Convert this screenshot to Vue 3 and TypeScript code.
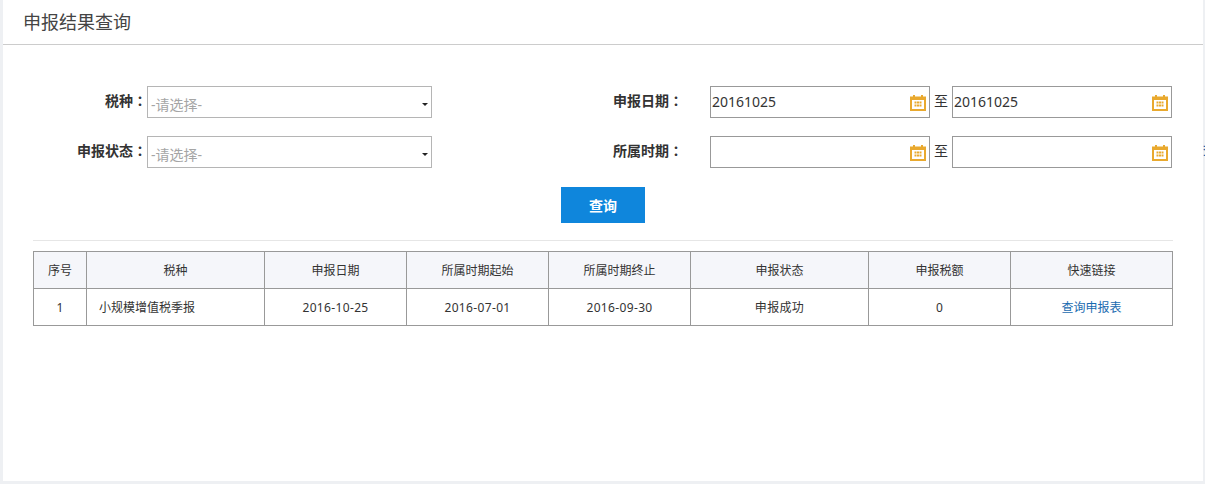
<script setup lang="ts">
const headers: { label: string; width: number }[] = [
  { label: '序号', width: 53 },
  { label: '税种', width: 178 },
  { label: '申报日期', width: 142 },
  { label: '所属时期起始', width: 142 },
  { label: '所属时期终止', width: 142 },
  { label: '申报状态', width: 178 },
  { label: '申报税额', width: 142 },
  { label: '快速链接', width: 162 },
]
const row = ['1', '小规模增值税季报', '2016-10-25', '2016-07-01', '2016-09-30', '申报成功', '0']
</script>

<template>
  <div class="page">
    <main class="panel">
      <h1 class="title">申报结果查询</h1>
      <form class="form" @submit.prevent>
        <div class="form-row">
          <label class="label label-left">税种<span class="colon">：</span></label>
          <div class="select"><span>-请选择-</span><i class="caret"></i></div>
          <label class="label label-right">申报日期<span class="colon">：</span></label>
          <div class="date"><span>20161025</span><svg class="cal" viewBox="0 0 16 16"><path fill="#e9a92f" fill-rule="evenodd" d="M3 0h2v1.5h6V0h2v1.5h3V16H0V1.5h3zM2 5v9h12V5z"/><path fill="#e9a92f" d="M4.5 6.5h2v2h-2zM7 6.5h2v2H7zM9.5 6.5h2v2h-2zM4.5 9.5h2v2h-2zM7 9.5h2v2H7zM9.5 9.5h2v2h-2z"/></svg></div>
          <span class="to">至</span>
          <div class="date"><span>20161025</span><svg class="cal" viewBox="0 0 16 16"><path fill="#e9a92f" fill-rule="evenodd" d="M3 0h2v1.5h6V0h2v1.5h3V16H0V1.5h3zM2 5v9h12V5z"/><path fill="#e9a92f" d="M4.5 6.5h2v2h-2zM7 6.5h2v2H7zM9.5 6.5h2v2h-2zM4.5 9.5h2v2h-2zM7 9.5h2v2H7zM9.5 9.5h2v2h-2z"/></svg></div>
        </div>
        <div class="form-row">
          <label class="label label-left">申报状态<span class="colon">：</span></label>
          <div class="select"><span>-请选择-</span><i class="caret"></i></div>
          <label class="label label-right">所属时期<span class="colon">：</span></label>
          <div class="date"><span></span><svg class="cal" viewBox="0 0 16 16"><path fill="#e9a92f" fill-rule="evenodd" d="M3 0h2v1.5h6V0h2v1.5h3V16H0V1.5h3zM2 5v9h12V5z"/><path fill="#e9a92f" d="M4.5 6.5h2v2h-2zM7 6.5h2v2H7zM9.5 6.5h2v2h-2zM4.5 9.5h2v2h-2zM7 9.5h2v2H7zM9.5 9.5h2v2h-2z"/></svg></div>
          <span class="to">至</span>
          <div class="date"><span></span><svg class="cal" viewBox="0 0 16 16"><path fill="#e9a92f" fill-rule="evenodd" d="M3 0h2v1.5h6V0h2v1.5h3V16H0V1.5h3zM2 5v9h12V5z"/><path fill="#e9a92f" d="M4.5 6.5h2v2h-2zM7 6.5h2v2H7zM9.5 6.5h2v2h-2zM4.5 9.5h2v2h-2zM7 9.5h2v2H7zM9.5 9.5h2v2h-2z"/></svg></div>
          <span class="clipped">查</span>
        </div>
        <div class="actions"><button class="query" type="submit">查询</button></div>
      </form>
      <div class="divider"></div>
      <table class="grid">
        <colgroup><col v-for="h in headers" :key="h.label" :style="{ width: h.width + 'px' }" /></colgroup>
        <thead><tr><th v-for="h in headers" :key="h.label">{{ h.label }}</th></tr></thead>
        <tbody>
          <tr>
            <td v-for="(c, i) in row" :key="i" :class="{ left: i === 1 }">{{ c }}</td>
            <td><a class="link" href="#" @click.prevent>查询申报表</a></td>
          </tr>
        </tbody>
      </table>
    </main>
  </div>
</template>

<style>
html, body { margin: 0; padding: 0; background: #eef0f3; }
</style>

<style scoped>
.page {
  width: 1205px;
  height: 484px;
  box-sizing: border-box;
  padding: 0 2px 3px 3px;
  background: #eef0f3;
  overflow: hidden;
  font-family: "Noto Sans", "Noto Sans CJK SC", sans-serif;
  color: #333;
}
.panel {
  height: 100%;
  background: #fff;
}
.title {
  margin: 0;
  height: 44px;
  border-bottom: 1px solid #ccc;
  padding-left: 20px;
  font-size: 18px;
  font-weight: 400;
  line-height: 44px;
  color: #444;
}
.form {
  padding-top: 41px;
}
.form-row {
  display: flex;
  align-items: stretch;
  height: 32px;
  margin-bottom: 18px;
  white-space: nowrap;
}
.label {
  font-size: 14px;
  font-weight: 700;
  line-height: 29px;
  color: #333;
  flex: none;
}
.colon {
  font-family: "Noto Sans CJK TC", sans-serif;
}
.label-left {
  width: 144px;
  text-align: right;
}
.label-right {
  width: 70px;
  margin-left: 181px;
  margin-right: 27px;
}
.select, .date {
  position: relative;
  box-sizing: border-box;
  border: 1px solid #b5b5b5;
  background: #fff;
  flex: none;
}
.select {
  width: 285px;
  padding-left: 3px;
  font-size: 14px;
  line-height: 35px;
  color: #a5a5a5;
}
.caret {
  position: absolute;
  right: 3px;
  top: 16px;
  width: 0;
  height: 0;
  border-left: 3.5px solid transparent;
  border-right: 3.5px solid transparent;
  border-top: 3.5px solid #222;
}
.date {
  width: 220px;
  border-color: #999;
  padding-left: 1px;
  font-size: 14px;
  line-height: 30px;
  color: #333;
}
.cal {
  position: absolute;
  right: 3px;
  top: 8px;
  width: 16px;
  height: 16px;
}
.to {
  width: 22px;
  flex: none;
  text-align: center;
  font-size: 14px;
  line-height: 30px;
  color: #333;
}
.clipped {
  margin-left: 31px;
  font-size: 12px;
  font-weight: 700;
  line-height: 30px;
  color: #1565b0;
}
.actions {
  display: flex;
  justify-content: center;
  margin-top: 1px;
}
.query {
  width: 84px;
  height: 36px;
  margin-top: 1px;
  border: 0;
  padding: 0;
  background: #0f86dc;
  color: #fff;
  font-family: inherit;
  font-size: 14px;
  font-weight: 700;
}
.divider {
  height: 1px;
  margin: 17px 30px 0;
  background: #e6e6e6;
}
.grid {
  table-layout: fixed;
  width: 1139px;
  margin: 10px 0 0 30px;
  border-collapse: collapse;
  font-size: 12px;
  color: #333;
}
.grid th, .grid td {
  border: 1px solid #999;
  padding: 0;
  text-align: center;
  font-weight: 400;
  letter-spacing: 0.35px;
}
.grid th {
  height: 36px;
  background: #f5f6fa;
  letter-spacing: 0;
}
.grid td {
  height: 36px;
}
.grid td.left {
  text-align: left;
  padding-left: 12px;
  letter-spacing: 0;
}
.link {
  color: #1a6bb0;
  text-decoration: none;
  letter-spacing: 0;
}
</style>
